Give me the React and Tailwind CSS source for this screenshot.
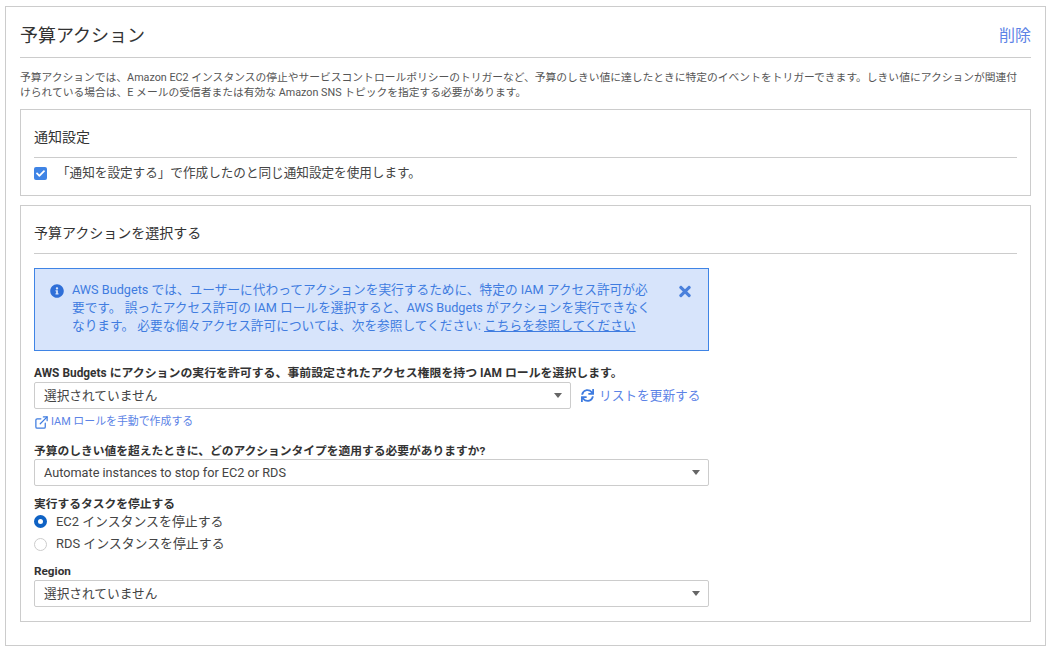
import { FaInfoCircle, FaTimes, FaSync, FaCheck } from 'react-icons/fa'
import { ExternalLink } from 'lucide-react'

const font = '[font-family:Roboto,"Noto_Sans_CJK_JP",sans-serif]'

function Caret() {
  return <span className="ml-auto w-0 h-0 border-x-[4.5px] border-x-transparent border-t-[5px] border-t-[#666]" />
}

function Select({ children, className = '' }) {
  return (
    <div className={`flex items-center h-[27px] pl-[9px] pr-[8px] bg-white border border-[#ccc] rounded-[2px] text-[12.7px] text-[#444] ${className}`}>
      <span>{children}</span>
      <Caret />
    </div>
  )
}

export default function App() {
  return (
    <div className={`${font} bg-white h-[656px] pt-[6px] pl-[5px] text-[#444]`}>
      <div className="border border-[#ccc] w-[1041px] h-[640px] px-[14px]">
        <div className="flex items-center justify-between h-[51px] pt-[7px] border-b border-[#ccc]">
          <h1 className="text-[18px] font-normal text-[#333]">予算アクション</h1>
          <a className="text-[16px] text-[#5c83e6]">削除</a>
        </div>

        <p className="mt-[12px] text-[10.77px] leading-[15px] text-[#555]">
          予算アクションでは、Amazon EC2 インスタンスの停止やサービスコントロールポリシーのトリガーなど、予算のしきい値に達したときに特定のイベントをトリガーできます。しきい値にアクションが関連付<br />
          けられている場合は、E メールの受信者または有効な Amazon SNS トピックを指定する必要があります。
        </p>

        <section className="mt-[9px] border border-[#ccc] h-[87px] px-[13px]">
          <div className="flex items-center h-[48px] pt-[7px] border-b border-[#ccc] text-[14px] text-[#333]">通知設定</div>
          <label className="flex items-center gap-[10px] mt-[6px] text-[12.6px]">
            <span className="flex items-center justify-center w-[13px] h-[13px] rounded-[2px] bg-[#3f84e5] text-white">
              <FaCheck className="w-[9px] h-[9px]" />
            </span>
            「通知を設定する」で作成したのと同じ通知設定を使用します。
          </label>
        </section>

        <section className="mt-[9px] border border-[#ccc] h-[417px] px-[13px]">
          <div className="flex items-center h-[48px] pt-[7px] border-b border-[#ccc] text-[14px] text-[#333]">予算アクションを選択する</div>

          <div className="mt-[14px] w-[675px] h-[83px] flex bg-[#d7e4fb] border border-[#3f84e5] text-[#3f7ce0] text-[12.7px] leading-[18px] pl-[15px] pt-[12px]">
            <FaInfoCircle className="w-[14px] h-[14px] mt-[3px] shrink-0 text-[#2f6fd8]" />
            <p className="ml-[8px] w-[590px]">
              AWS Budgets では、ユーザーに代わってアクションを実行するために、特定の IAM アクセス許可が必<br />
              要です。 誤ったアクセス許可の IAM ロールを選択すると、AWS Budgets がアクションを実行できなく<br />
              なります。 必要な個々アクセス許可については、次を参照してください: <a className="underline">こちらを参照してください</a>
            </p>
            <FaTimes className="w-[12px] h-[17px] mt-[2px] ml-[17px] shrink-0 text-[#4a80dc]" />
          </div>

          <div className="mt-[14px] pb-[1px] text-[11.9px] font-bold leading-[16px] text-[#333]">AWS Budgets にアクションの実行を許可する、事前設定されたアクセス権限を持つ IAM ロールを選択します。</div>
          <div className="flex items-center w-[675px]">
            <Select className="w-[537px]">選択されていません</Select>
            <a className="flex items-center gap-[5px] ml-[10px] text-[12.7px] text-[#5c83e6]">
              <FaSync className="w-[13px] h-[13px] text-[#3f7ce0]" />
              リストを更新する
            </a>
          </div>
          <a className="flex items-center gap-[2px] mt-[5px] text-[10.9px] leading-[16px] text-[#5c83e6]">
            <ExternalLink className="w-[15px] h-[15px] text-[#3f7ce0]" strokeWidth={2} />
            IAM ロールを手動で作成する
          </a>

          <div className="mt-[13px] w-[675px]">
            <div className="text-[11.75px] font-bold leading-[16px] text-[#333]">予算のしきい値を超えたときに、どのアクションタイプを適用する必要がありますか?</div>
            <Select>Automate instances to stop for EC2 or RDS</Select>
          </div>

          <div className="mt-[10px] text-[11.75px] font-bold leading-[16px] text-[#333]">実行するタスクを停止する</div>
          <div className="flex items-center gap-[9px] h-[19px] text-[12.9px]">
            <span className="w-[13px] h-[13px] rounded-full border-[4px] border-[#0f62c4] bg-white" />
            EC2 インスタンスを停止する
          </div>
          <div className="flex items-center gap-[9px] h-[26px] text-[12.9px]">
            <span className="w-[13px] h-[13px] rounded-full border border-[#ccc] bg-white" />
            RDS インスタンスを停止する
          </div>

          <div className="mt-[6px] w-[675px]">
            <div className="pb-[1px] text-[11.75px] font-bold leading-[16px] text-[#333]">Region</div>
            <Select>選択されていません</Select>
          </div>
        </section>
      </div>
    </div>
  )
}
